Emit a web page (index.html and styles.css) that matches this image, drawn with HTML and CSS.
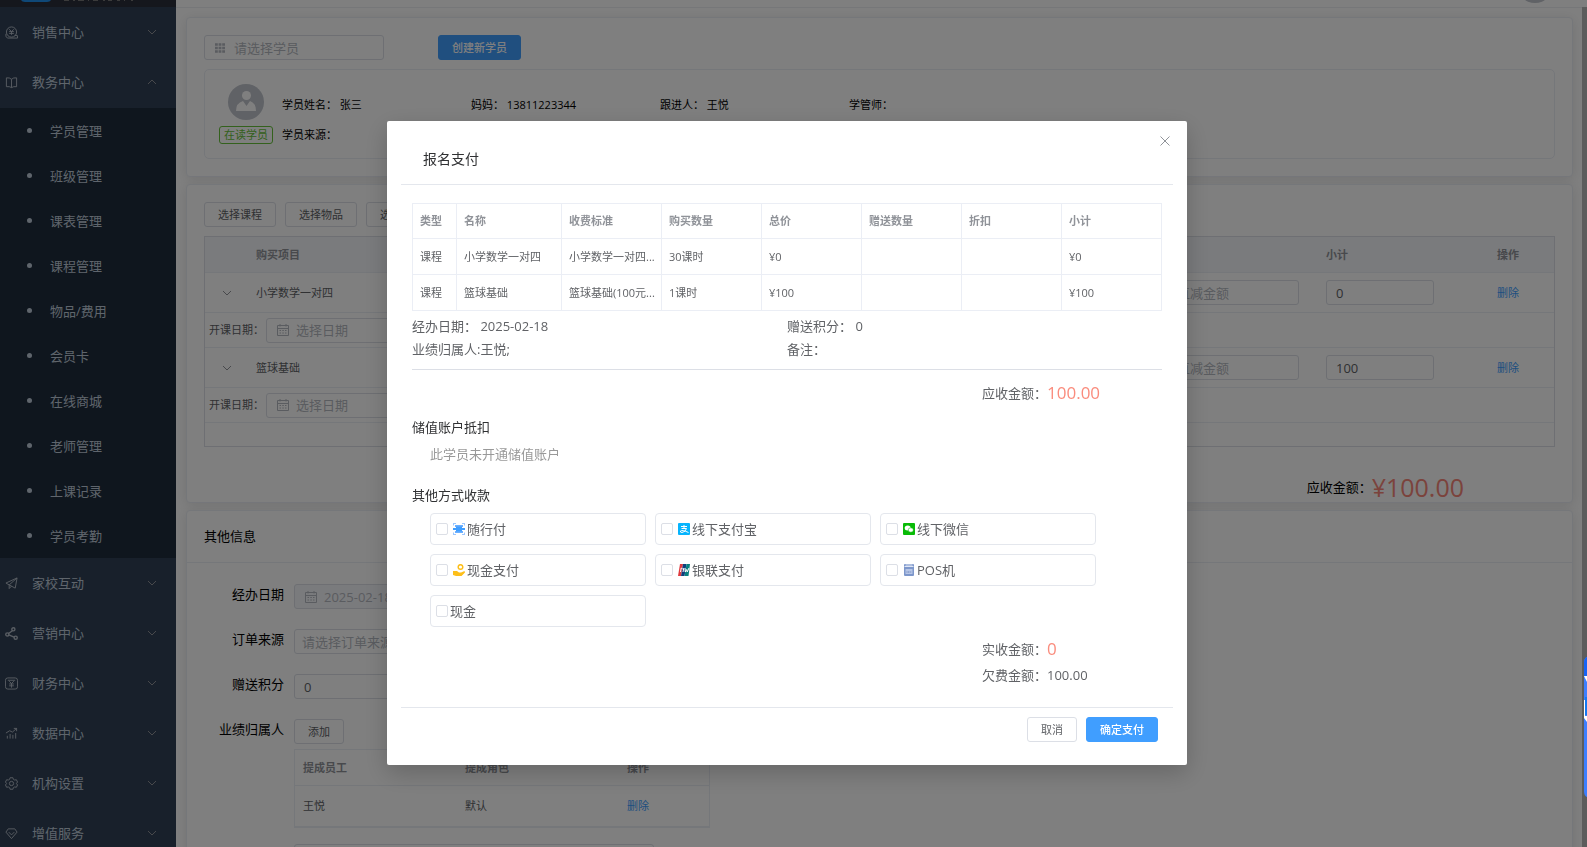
FILE: index.html
```html
<!DOCTYPE html>
<html lang="zh-CN">
<head>
<meta charset="utf-8">
<title>报名支付</title>
<link rel="stylesheet" href="styles.css">
</head>
<body>
<svg class="defs" aria-hidden="true">
  <symbol id="down" viewBox="0 0 10 10"><path d="M1 3l4 4 4-4"/></symbol>
  <symbol id="up" viewBox="0 0 10 10"><path d="M1 7l4-4 4 4"/></symbol>
  <symbol id="calendar" viewBox="0 0 12 12"><path d="M.5 1.500h11v10H.5zM.5 4.500h11M3 0v2.500M9 0v2.500M2.500 6.500h1.500M5.300 6.500h1.500M8 6.500h1.500M2.500 9h1.500M5.300 9h1.500M8 9h1.500"/></symbol>
</svg>
<div class="app">
  <nav class="sidebar">
    <div class="brand">
      <svg width="120" height="3" viewBox="0 0 120 3"><path d="M0 0h30q-1 2-4 2H4q-3 0-4-2z" fill="#1e90ef"/><path d="M43 .5h5M52 .5h2M57 .5h6M67 .5h1M72 .5h5M82 .5h2M87 .5h4M96 .5h3M103 .5h1M110 .5h2" stroke="#777" fill="none"/></svg>
    </div>
    <ul class="menu">
      <li><button class="group"><svg class="ic" viewBox="0 0 14 14"><circle cx="7" cy="6.500" r="5.500"/><path d="M4.500 3.500L7 6l2.500-2.500M4.500 6h5M4.500 8h5M7 6v3.500M1 8.500v3l2 1.500h10.500v-2.500l-3-.5"/></svg><span>销售中心</span><svg class="arrow"><use href="#down"/></svg></button></li>
      <li><button class="group" aria-expanded="true"><svg class="ic" viewBox="0 0 14 14"><path d="M7 3.500Q5 1.500 1.500 2v9.500Q5 11 7 12.500 9 11 12.500 11.500V2Q9 1.500 7 3.500zM7 3.500v9"/></svg><span>教务中心</span><svg class="arrow"><use href="#up"/></svg></button>
        <ul class="submenu">
          <li><a href="#">学员管理</a></li>
          <li><a href="#">班级管理</a></li>
          <li><a href="#">课表管理</a></li>
          <li><a href="#">课程管理</a></li>
          <li><a href="#">物品/费用</a></li>
          <li><a href="#">会员卡</a></li>
          <li><a href="#">在线商城</a></li>
          <li><a href="#">老师管理</a></li>
          <li><a href="#">上课记录</a></li>
          <li><a href="#">学员考勤</a></li>
        </ul>
      </li>
      <li><button class="group"><svg class="ic" viewBox="0 0 14 14"><path d="M13 1L1 6.500l3.500 2L11 12zM13 1L4.500 8.500V12.500l2.500-2.700"/></svg><span>家校互动</span><svg class="arrow"><use href="#down"/></svg></button></li>
      <li><button class="group"><svg class="ic bold" viewBox="0 0 14 14"><circle cx="9" cy="2.500" r="1.700"/><circle cx="2.500" cy="8" r="1.700"/><circle cx="11.500" cy="11.500" r="1.700"/><path d="M8 4L3.800 7M4.200 8.500l5.500 2.300"/></svg><span>营销中心</span><svg class="arrow"><use href="#down"/></svg></button></li>
      <li><button class="group"><svg class="ic" viewBox="0 0 14 14"><rect x=".5" y="1" width="13" height="12" rx="2.500"/><path d="M3 3.500h8M4.500 4.500L7 7l2.500-2.500M4.500 7.500h5M4.500 9.500h5M7 7v4.500"/></svg><span>财务中心</span><svg class="arrow"><use href="#down"/></svg></button></li>
      <li><button class="group"><svg class="ic" viewBox="0 0 14 14"><path d="M1 6.500L5 4l3 1.500 4.500-4M9.500 1.500h3v3M2.500 12.500V9.500M5.500 12.500v-5M8.500 12.500v-4M11.500 12.500v-6"/></svg><span>数据中心</span><svg class="arrow"><use href="#down"/></svg></button></li>
      <li><button class="group"><svg class="ic" viewBox="0 0 14 14"><circle cx="7" cy="7" r="2.300"/><path d="M5.500 .8h3l.5 1.700 1.500.8 1.700-.4 1.300 2.500-1.200 1.600 1.200 1.600-1.300 2.500-1.700-.4-1.500.8-.5 1.700h-3l-.5-1.700-1.500-.8-1.700.4L.5 8.600 1.700 7 .5 5.400l1.300-2.500 1.700.4 1.500-.8z"/></svg><span>机构设置</span><svg class="arrow"><use href="#down"/></svg></button></li>
      <li><button class="group"><svg class="ic" viewBox="0 0 14 14"><path d="M3.500 2h7L13 5.500 7 12.500 1 5.500zM4 5.500l3 3 3-3"/></svg><span>增值服务</span><svg class="arrow"><use href="#down"/></svg></button></li>
    </ul>
  </nav>

  <main class="main">
    <header class="topbar"><span class="me"></span></header>
    <div class="content">
      <section class="card student">
        <div class="bar wide">
          <label class="field picker"><svg viewBox="0 0 10 10"><path d="M0 1.500h10M0 5h10M0 8.500h10" stroke-width="2.600" stroke-dasharray="2.800 .8"/></svg><input placeholder="请选择学员" aria-label="请选择学员"></label>
          <button class="btn primary">创建新学员</button>
        </div>
        <div class="profile">
          <div class="who">
            <svg class="avatar" viewBox="0 0 36 36"><circle cx="18" cy="18" r="18" fill="#c0c4cc"/><circle cx="18.500" cy="11.500" r="4.500" fill="#fff"/><path d="M8 27q0-8 7-10l3.500 5 3.500-5q6 2 6 10z" fill="#fff"/></svg>
            <span class="tag">在读学员</span>
          </div>
          <div class="facts">
            <span>学员姓名： 张三</span><span>妈妈： 13811223344</span><span>跟进人： 王悦</span><span>学管师：</span>
            <span>学员来源：</span>
          </div>
        </div>
      </section>

      <section class="card order">
        <div class="bar"><button class="btn">选择课程</button><button class="btn">选择物品</button><button class="btn">选择套餐</button></div>
        <table class="items">
          <colgroup><col class="c-open"><col><col class="c-cut"><col class="c-sub"><col class="c-act"></colgroup>
          <thead><tr><th></th><th>购买项目</th><th></th><th>小计</th><th>操作</th></tr></thead>
          <tbody>
            <tr class="item"><td><svg class="arrow"><use href="#down"/></svg></td><td>小学数学一对四</td><td><input class="cut" placeholder="直减金额" aria-label="直减金额"></td><td><input class="sub" value="0" aria-label="小计"></td><td><a href="#">删除</a></td></tr>
            <tr class="extra"><td colspan="5"><div class="start"><label for="d1">开课日期：</label><span class="field"><svg viewBox="0 0 12 12"><use href="#calendar"/></svg><input id="d1" placeholder="选择日期"></span></div></td></tr>
            <tr class="item"><td><svg class="arrow"><use href="#down"/></svg></td><td>篮球基础</td><td><input class="cut" placeholder="直减金额" aria-label="直减金额"></td><td><input class="sub" value="100" aria-label="小计"></td><td><a href="#">删除</a></td></tr>
            <tr class="extra"><td colspan="5"><div class="start"><label for="d2">开课日期：</label><span class="field"><svg viewBox="0 0 12 12"><use href="#calendar"/></svg><input id="d2" placeholder="选择日期"></span></div></td></tr>
            <tr class="last"><td colspan="5"></td></tr>
          </tbody>
        </table>
        <div class="total"><span>应收金额：</span><strong>¥100.00</strong></div>
      </section>

      <section class="card other">
        <h2>其他信息</h2>
        <div class="form">
          <label for="f1">经办日期</label>
          <span class="field off"><svg viewBox="0 0 12 12"><use href="#calendar"/></svg><input id="f1" value="2025-02-18" disabled></span>
          <label for="f2">订单来源</label>
          <select id="f2"><option>请选择订单来源</option></select>
          <label for="f3">赠送积分</label>
          <input id="f3" class="plain" value="0">
          <span class="lab">业绩归属人</span>
          <div class="owners">
            <button class="btn">添加</button>
            <table class="people">
              <thead><tr><th>提成员工</th><th>提成角色</th><th>操作</th></tr></thead>
              <tbody><tr><td>王悦</td><td>默认</td><td><a href="#">删除</a></td></tr></tbody>
            </table>
            <textarea aria-label="备注"></textarea>
          </div>
        </div>
      </section>
    </div>
    <span class="thumb"></span>
  </main>
</div>

<div class="mask">
  <div class="dialog" role="dialog" aria-labelledby="dlg">
    <button class="close" aria-label="关闭"><svg viewBox="0 0 10 10"><path d="M.5.500l9 9M9.500.500l-9 9"/></svg></button>
    <h1 id="dlg">报名支付</h1>
    <div class="body">
      <table class="bill">
        <colgroup><col class="b-type"><col class="b-name"><col><col><col><col><col><col></colgroup>
        <thead><tr><th>类型</th><th>名称</th><th>收费标准</th><th>购买数量</th><th>总价</th><th>赠送数量</th><th>折扣</th><th>小计</th></tr></thead>
        <tbody>
          <tr><td>课程</td><td>小学数学一对四</td><td>小学数学一对四...</td><td>30课时</td><td>¥0</td><td></td><td></td><td>¥0</td></tr>
          <tr><td>课程</td><td>篮球基础</td><td>篮球基础(100元...</td><td>1课时</td><td>¥100</td><td></td><td></td><td>¥100</td></tr>
        </tbody>
      </table>
      <div class="info"><span>经办日期： 2025-02-18</span><span>赠送积分： 0</span><span>业绩归属人:王悦;</span><span>备注：</span></div>
      <div class="sum due"><p>应收金额：<b>100.00</b></p></div>
      <h3>储值账户抵扣</h3>
      <p class="none">此学员未开通储值账户</p>
      <h3 class="pay">其他方式收款</h3>
      <div class="ways">
        <label><input type="checkbox"><svg viewBox="0 0 12 12"><path d="M0 2.500V0h3M9 0h3v2.500M0 9.500V12h3M9 12h3V9.500" fill="none" stroke="#9cc7ff" stroke-width="2"/><path d="M2 2h8v2H2zM2 8h8v2H2z" fill="#6db0ff"/><path d="M0 5h12v2H0zM3 3.500h6v5H3z" fill="#409eff"/></svg>随行付</label>
        <label><input type="checkbox"><svg viewBox="0 0 12 12"><rect width="12" height="12" rx="1" fill="#06b4fd"/><path d="M3 3.500h6M6 2v3.500M3.500 5.500h5Q7.500 9 4 9.500 2 9.500 2.500 8 4 6.500 10.500 9.500" fill="none" stroke="#fff"/></svg>线下支付宝</label>
        <label><input type="checkbox"><svg viewBox="0 0 12 12"><rect width="12" height="12" rx="1" fill="#09bb07"/><ellipse cx="4.700" cy="5" rx="3" ry="2.500" fill="#fff"/><ellipse cx="7.800" cy="7" rx="2.600" ry="2.200" fill="#fff" stroke="#09bb07" stroke-width=".5"/></svg>线下微信</label>
        <label><input type="checkbox"><svg viewBox="0 0 12 12"><circle cx="7.500" cy="3" r="2.300" fill="none" stroke="#fdbf1a" stroke-width="1.500"/><path d="M0 7h4l2 1.500h2L11.500 7l.5 1.500L8.500 12H3L0 11z" fill="#fdbf1a"/></svg>现金支付</label>
        <label><input type="checkbox"><svg viewBox="0 0 12 12"><path d="M2 0h3L3 12H0z" fill="#e03a3e"/><path d="M5 0h3.500L6.500 12H3z" fill="#123e7c"/><path d="M8.500 0H12l-1.500 12h-4z" fill="#0a8080"/><path d="M2.500 8l.7-4 1.500 1M5 8l.8-4M7 4l.2 4 1.500-2.500L9.200 8 11 4" fill="none" stroke="#fff"/></svg>银联支付</label>
        <label><input type="checkbox"><svg viewBox="0 0 12 12"><rect x="1" width="10" height="12" rx="1" fill="#7d97cb"/><path d="M1.500 2.500h9M2.500 1h7" stroke="#dfe6f5"/><rect x="2.500" y="5" width="7" height="5" fill="#b6c5e6"/><path d="M3.500 8h5" stroke="#6580b8" stroke-dasharray="1 .6"/></svg>POS机</label>
        <label><input type="checkbox">现金</label>
      </div>
      <div class="sum paid"><p>实收金额：<b>0</b></p><p>欠费金额：100.00</p></div>
    </div>
    <footer><button class="btn">取消</button><button class="btn primary">确定支付</button></footer>
  </div>
</div>
<svg class="helper" width="4" height="140" viewBox="0 0 4 140"><path d="M4 0Q1 1 1 6v128q0 5 3 6z" fill="#3d7fff"/><path d="M4 0Q1 1 1 6v13h3z" fill="#1763f5"/><path d="M1 19h3v6zM1 43v18l3 4v-6H2V43z" fill="#fff"/><path d="M2 40h2v18H2z" fill="#1479f2"/></svg>
</body>
</html>
```
FILE: styles.css
```css
* { box-sizing: border-box; }
body, h1, h2, h3, p, ul { margin: 0; padding: 0; }
body {
  font-family: "Open Sans", "Noto Sans CJK SC", sans-serif;
  font-size: 13px;
  line-height: 20px;
  color: #606266;
  background: #fff;
  overflow: hidden;
}
ul { list-style: none; }
h1, h2, h3 { font-weight: 400; }
button, input, select, textarea { font: inherit; color: inherit; }
a { color: #409eff; text-decoration: none; }
svg { fill: none; stroke: none; flex: none; }
.defs { position: absolute; width: 0; height: 0; }

.app { display: flex; height: 100vh; overflow: hidden; }

/* sidebar */
.sidebar { width: 176px; flex: none; background: #304156; color: #bfcbd9; overflow: hidden; }
.brand { height: 7px; padding-left: 21px; background: #2b2f3a; }
.brand svg { display: block; }
.group {
  display: flex; align-items: center; width: 100%; height: 50px;
  padding: 0 19px 0 5px; border: 0; background: none; text-align: left;
}
.group span { flex: 1; padding-left: 14px; }
.ic { width: 13px; height: 13px; stroke: #b4bcc8; stroke-width: 1; }
.ic.bold { stroke-width: 1.5; }
.arrow { width: 10px; height: 10px; stroke: #909399; }
.submenu { margin-top: 1px; background: #1f2d3d; }
.submenu a { display: flex; align-items: center; height: 45px; padding-left: 27px; color: #bfcbd9; }
.submenu a::before { content: ""; width: 5px; height: 5px; margin-right: 18px; border-radius: 50%; background: #bfcbd9; }

/* page */
.main { position: relative; flex: 1; min-width: 0; overflow: hidden; }
.topbar { display: flex; justify-content: flex-end; align-items: flex-end; height: 8px; padding: 0 34px 4px; border-bottom: 1px solid #eceef2; }
.me { width: 36px; height: 36px; border-radius: 50%; background: #c0c4cc; }
.thumb { position: absolute; top: 7px; right: 0; bottom: 0; width: 5px; background: #b8b8b8; }
.content { display: flex; flex-direction: column; gap: 7px; padding: 9px 14px 0 10px; }
.card { border: 1px solid #ebeef5; border-radius: 4px; background: #fff; box-shadow: 0 2px 12px rgba(0, 0, 0, .1); padding: 17px; }
.bar { display: flex; gap: 9px; }
.bar.wide { gap: 54px; }
.btn {
  height: 25px; padding: 0 13px; border: 1px solid #dcdfe6; border-radius: 3px;
  background: #fff; font-size: 11px; line-height: 16px; white-space: nowrap;
}
.btn.primary { border-color: #409eff; background: #409eff; color: #fff; font-weight: 500; }
.field, .plain, select, .cut, .sub, textarea { height: 25px; border: 1px solid #dcdfe6; border-radius: 3px; background: #fff; }
.field { display: flex; align-items: center; gap: 7px; padding: 0 10px; }
.field svg { width: 12px; height: 12px; stroke: #b4b8c0; }
.field input { flex: 1; min-width: 0; border: 0; padding: 0; background: none; }
::placeholder { color: #b4b8c0; opacity: 1; }
.picker { width: 180px; gap: 9px; }
.picker svg { width: 10px; height: 10px; }

.profile { display: flex; gap: 9px; margin-top: 9px; height: 90px; padding: 14px; border: 1px solid #ebeef5; border-radius: 5px; }
.who { display: flex; flex-direction: column; align-items: center; gap: 6px; }
.avatar { width: 36px; height: 36px; }
.tag { height: 18px; padding: 0 4px; border: 1px solid #67c23a; border-radius: 3px; color: #67c23a; font-size: 11px; line-height: 16px; }
.facts { display: grid; grid-template-columns: repeat(4, 189px); grid-auto-rows: 30px; padding-top: 6px; font-size: 11px; line-height: 30px; color: #000; }

table { border-spacing: 0; table-layout: fixed; font-size: 11px; line-height: 20px; }
th { color: #909399; font-weight: 700; text-align: left; }
.order { padding-bottom: 0; }
.items { width: 100%; margin-top: 9px; border: 1px solid #dcdfe6; }
.items th, .items td { padding: 0 9px; border-bottom: 1px solid #ebeef5; text-align: left; }
.items th { height: 36px; background: #f5f7fa; }
.items .item td { height: 40px; }
.items .extra td { height: 35px; padding: 0 4px; }
.items .last td { height: 23px; border-bottom: 0; }
.items td .arrow { display: block; margin-left: 8px; }
.c-open { width: 42px; }
.c-cut { width: 159px; }
.c-sub { width: 171px; }
.c-act { width: 66px; }
.cut, .sub { display: block; padding: 0 9px; font-size: 13px; }
.cut { width: 132px; }
.sub { width: 108px; }
.start { display: flex; align-items: center; gap: 2px; }
.start .field { width: 198px; }
.start .field input { font-size: 13px; }
.total { display: flex; justify-content: flex-end; align-items: center; height: 30px; margin: 25px 91px 0 0; color: #000; }
.total strong { color: #f78679; font-weight: 400; font-size: 25px; line-height: 30px; }

.other { padding: 0; flex: none; }
.other h2 { height: 52px; padding: 15px 17px; border-bottom: 1px solid #ebeef5; font-size: 13px; color: #000; }
.form { display: grid; grid-template-columns: 80px 416px; column-gap: 10px; row-gap: 20px; padding: 21px 17px; }
.form > label, .lab { text-align: right; color: #000; }
.form > .field, .form > .plain, .form > select { width: 360px; }
.field.off { background: #f5f7fa; color: #b4b8c0; }
.form > select { appearance: none; padding: 0 7px; color: #b4b8c0; }
.plain { padding: 0 9px; }
.people { width: 100%; margin: 5px 0 16px; border: 1px solid #ebeef5; border-bottom-width: 2px; }
.people th, .people td { padding: 0 8px; }
.people th { height: 36px; border-bottom: 1px solid #ebeef5; }
.people td { height: 40px; }
.people th:nth-child(-n+2) { width: 162px; }
textarea { display: block; width: 360px; height: 50px; resize: none; }

/* payment dialog */
.mask { position: fixed; inset: 0; padding: 121px 13px 0 0; background: rgba(0, 0, 0, .5); }
.dialog { position: relative; width: 800px; margin: 0 auto; padding: 0 14px; border-radius: 2px; background: #fff; box-shadow: 0 8px 24px rgba(0, 0, 0, .2); }
.close { position: absolute; top: 11px; right: 13px; width: 18px; height: 18px; padding: 4px; border: 0; background: none; }
.close svg { display: block; width: 10px; height: 10px; stroke: #909399; }
h1 { height: 64px; padding: 28px 22px 0; border-bottom: 1px solid #e4e7ed; font-size: 14px; color: #303133; }
.body { padding: 18px 11px 20px; border-bottom: 1px solid #e4e7ed; }
.bill { width: 100%; border-collapse: collapse; }
.bill th, .bill td { height: 36px; padding: 0 4px 0 7px; border: 1px solid #ebeef5; white-space: nowrap; }
.bill th { height: 35px; }
.b-type { width: 44px; }
.b-name { width: 105px; }
.info { display: grid; grid-template-columns: 1fr 1fr; grid-auto-rows: 23px; line-height: 23px; margin-top: 4px; padding-bottom: 8px; border-bottom: 1px solid #dcdfe6; }
.sum { width: 180px; margin-left: auto; line-height: 24px; }
.sum p:first-child { display: flex; align-items: center; height: 28px; }
.sum b { color: #fa8c7d; font-size: 17px; font-weight: 400; }
.due { margin-top: 9px; }
.paid { margin-top: 8px; }
h3 { margin-top: 10px; font-size: 13px; color: #303133; }
.none { margin: 7px 0 0 18px; color: #999; }
h3.pay { margin-top: 21px; }
.ways { display: grid; grid-template-columns: repeat(3, 216px); gap: 9px; margin: 8px 0 0 18px; }
.ways label { display: flex; align-items: center; height: 32px; padding-left: 5px; border: 1px solid #e4e7ed; border-radius: 4px; }
.ways input { appearance: none; width: 12px; height: 12px; margin: 0 2px 0 0; border: 1px solid #dcdfe6; border-radius: 2px; background: #fff; }
.ways svg { width: 12px; height: 12px; margin: 0 2px 0 3px; }
footer { display: flex; justify-content: flex-end; gap: 9px; padding: 9px 15px 23px; }

.helper { position: fixed; right: 0; top: 657px; }
```
